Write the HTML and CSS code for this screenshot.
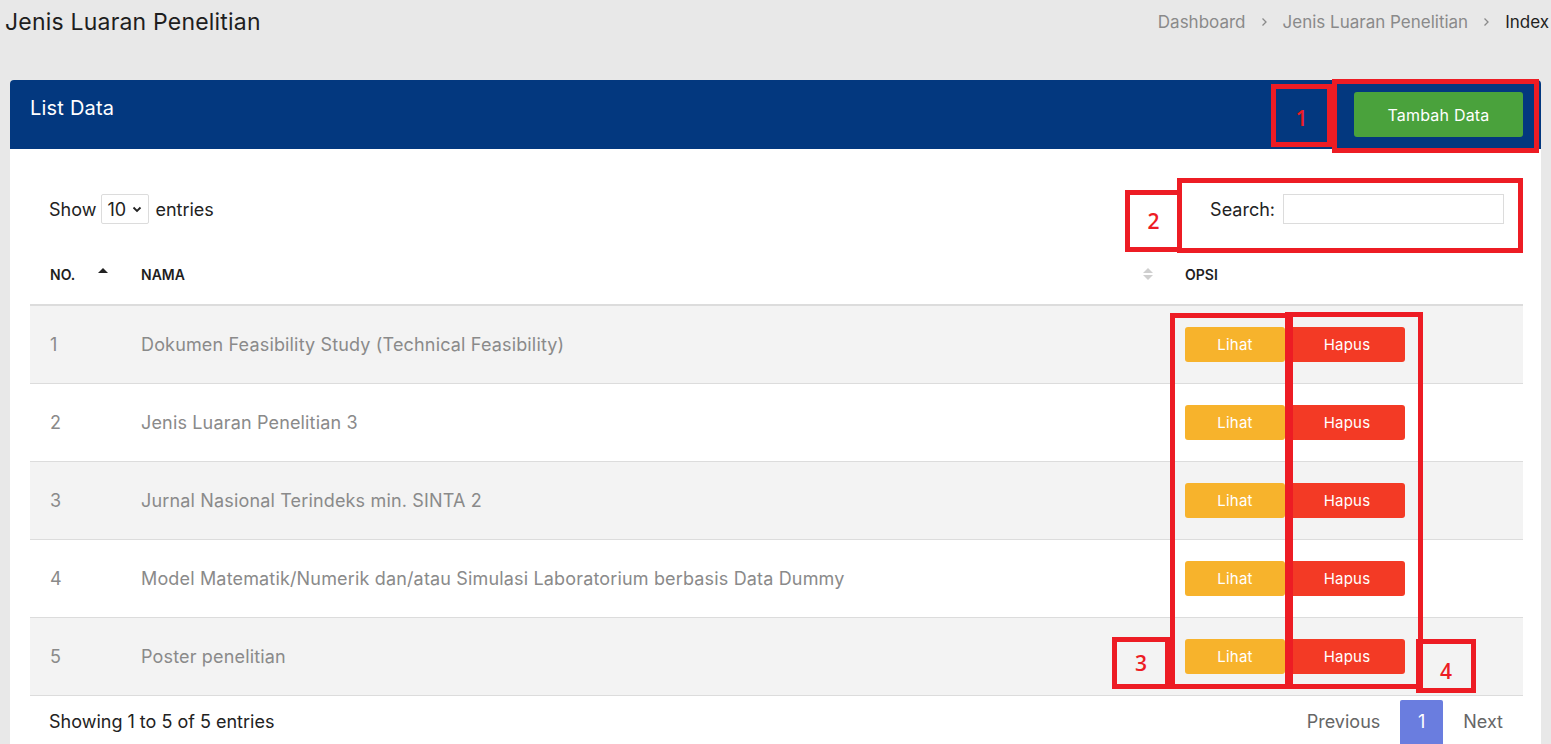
FILE: index.html
```html
<!DOCTYPE html>
<html lang="id">
<head>
<meta charset="utf-8">
<title>Jenis Luaran Penelitian</title>
<link rel="stylesheet" href="styles.css">
</head>
<body>
<div class="topbar">
  <h1 class="page-title">Jenis Luaran Penelitian</h1>
  <nav class="crumbs">
    <span class="crumb">Dashboard</span>
    <svg class="sep" width="7" height="10" viewBox="0 0 7 10"><path d="M1.5 1.5 L5 5 L1.5 8.5" fill="none" stroke="#8a8a8a" stroke-width="1.3"/></svg>
    <span class="crumb">Jenis Luaran Penelitian</span>
    <svg class="sep" width="7" height="10" viewBox="0 0 7 10"><path d="M1.5 1.5 L5 5 L1.5 8.5" fill="none" stroke="#8a8a8a" stroke-width="1.3"/></svg>
    <span class="crumb current">Index</span>
  </nav>
</div>

<div class="card">
  <div class="card-head">
    <div class="card-title">List Data</div>
    <button class="btn btn-green">Tambah Data</button>
  </div>
  <div class="card-body">
    <div class="controls">
      <div class="length">Show
        <span class="select-box">10
          <svg width="10" height="7" viewBox="0 0 10 7"><path d="M1.5 1.5 L5 5 L8.5 1.5" fill="none" stroke="#222" stroke-width="1.8"/></svg>
        </span>
        entries</div>
      <div class="search">Search: <span class="search-input"></span></div>
    </div>
    <table class="data">
      <thead>
        <tr>
          <th class="c-no sort-asc">NO.</th>
          <th class="c-name sort-both">NAMA</th>
          <th class="c-opt">OPSI</th>
        </tr>
      </thead>
      <tbody>
        <tr class="odd"><td>1</td><td>Dokumen Feasibility Study (Technical Feasibility)</td><td><div class="acts"><button class="btn btn-yellow">Lihat</button><button class="btn btn-red">Hapus</button></div></td></tr>
        <tr><td>2</td><td>Jenis Luaran Penelitian 3</td><td><div class="acts"><button class="btn btn-yellow">Lihat</button><button class="btn btn-red">Hapus</button></div></td></tr>
        <tr class="odd"><td>3</td><td>Jurnal Nasional Terindeks min. SINTA 2</td><td><div class="acts"><button class="btn btn-yellow">Lihat</button><button class="btn btn-red">Hapus</button></div></td></tr>
        <tr><td>4</td><td>Model Matematik/Numerik dan/atau Simulasi Laboratorium berbasis Data Dummy</td><td><div class="acts"><button class="btn btn-yellow">Lihat</button><button class="btn btn-red">Hapus</button></div></td></tr>
        <tr class="odd"><td>5</td><td>Poster penelitian</td><td><div class="acts"><button class="btn btn-yellow">Lihat</button><button class="btn btn-red">Hapus</button></div></td></tr>
      </tbody>
    </table>
    <div class="table-foot">
      <div class="info">Showing 1 to 5 of 5 entries</div>
      <div class="pager">
        <span class="pg">Previous</span>
        <span class="pg active">1</span>
        <span class="pg">Next</span>
      </div>
    </div>
  </div>
</div>

<div class="mark a1-label">1</div>
<div class="mark a1-box"></div>
<div class="mark a2-label">2</div>
<div class="mark a2-box"></div>
<div class="mark a3-col"></div>
<div class="mark a4-col"></div>
<div class="mark a3-label">3</div>
<div class="mark a4-label">4</div>
</body>
</html>
```

FILE: styles.css
```css
* { box-sizing: border-box; }
html, body { margin: 0; padding: 0; }
body {
  background: #e8e8e8;
  font-family: "Inter", "Noto Sans", sans-serif;
  color: #222;
  width: 1551px;
  height: 744px;
  overflow: hidden;
  position: relative;
}
.topbar {
  height: 44px;
  display: flex;
  align-items: center;
  justify-content: space-between;
  padding: 0 2px 0 5px;
}
.page-title {
  margin: 0;
  font-size: 23px;
  font-weight: 400;
  letter-spacing: 0.2px;
  color: #1e1e1e;
}
.crumbs {
  display: flex;
  align-items: center;
  font-size: 17px;
  color: #8a8a8a;
}
.crumbs .sep { margin: 0 15px; }
.crumbs .current { color: #1e1e1e; }

.card {
  margin: 36px 10px 0 10px;
  background: #fff;
  border-radius: 4px 4px 0 0;
}
.card-head {
  background: #03387f;
  height: 69px;
  padding: 12px 18px 12px 20px;
  display: flex;
  justify-content: space-between;
  align-items: flex-start;
  border-radius: 4px 4px 0 0;
}
.card-title {
  color: #fff;
  font-size: 20px;
  letter-spacing: 0.2px;
  line-height: 28px;
  padding-top: 2px;
}
.btn {
  font-family: inherit;
  border: 0;
  color: #fff;
  cursor: pointer;
  border-radius: 3px;
  letter-spacing: 0.2px;
}
.btn-green {
  background: #4aa23c;
  width: 169px;
  height: 45px;
  font-size: 16px;
}
.card-body {
  padding: 45px 18px 0 20px;
}
.controls {
  height: 30px;
  display: flex;
  justify-content: space-between;
  align-items: center;
  font-size: 18px;
  padding-left: 19px;
  padding-right: 19px;
}
.length, .search {
  display: flex;
  align-items: center;
}
.select-box {
  display: inline-flex;
  align-items: center;
  justify-content: space-between;
  width: 48px;
  height: 30px;
  border: 1px solid #dcdcdc;
  margin: 0 6px 0 5px;
  padding: 0 6px 0 5px;
  border-radius: 2px;
}
.search-input {
  display: inline-block;
  width: 221px;
  height: 30px;
  border: 1px solid #dcdcdc;
  margin-left: 8px;
}

.data {
  width: 100%;
  border-collapse: collapse;
  margin-top: 26px;
}
.data th {
  text-align: left;
  font-size: 14px;
  font-weight: 600;
  color: #1e1e1e;
  line-height: 20px;
  padding: 15px 20px 19px 20px;
  border-bottom: 2px solid #dcdcdc;
  position: relative;
}
.c-no { width: 91px; }
.c-name { width: 1044px; }
.sort-asc::after {
  content: "";
  position: absolute;
  right: 13px;
  top: 18px;
  border-left: 5px solid transparent;
  border-right: 5px solid transparent;
  border-bottom: 5px solid #222;
}
.sort-both::before {
  content: "";
  position: absolute;
  right: 12px;
  top: 18px;
  border-left: 5px solid transparent;
  border-right: 5px solid transparent;
  border-bottom: 5px solid #cfcfcf;
}
.sort-both::after {
  content: "";
  position: absolute;
  right: 12px;
  top: 25px;
  border-left: 5px solid transparent;
  border-right: 5px solid transparent;
  border-top: 5px solid #cfcfcf;
}
.data td {
  height: 78px;
  padding: 0 20px;
  font-size: 18px;
  letter-spacing: 0.16px;
  color: #8a8a8a;
  border-bottom: 1px solid #dcdcdc;
}
.data tr.odd td { background: #f3f3f3; }
.acts {
  display: flex;
  gap: 4px;
}
.btn-yellow {
  background: #f7b32c;
  width: 100px;
  height: 35px;
  font-size: 15px;
}
.btn-red {
  background: #f33a25;
  width: 116px;
  height: 35px;
  font-size: 15px;
}

.table-foot {
  display: flex;
  justify-content: space-between;
  align-items: flex-start;
}
.info {
  font-size: 18px;
  padding: 15px 0 0 19px;
  line-height: 22px;
}
.pager {
  display: flex;
  margin-top: 4px;
}
.pg {
  font-size: 18px;
  color: #666;
  height: 46px;
  line-height: 44px;
  padding: 0 20px;
}
.pg.active {
  background: #6a7ddf;
  color: #fff;
  width: 43px;
  padding: 0;
  text-align: center;
  border-radius: 2px;
}

.mark {
  position: absolute;
  border: 5px solid #ed1c24;
  color: #ed1c24;
  font-family: "Open Sans", "Liberation Sans", sans-serif;
  font-weight: 600;
  font-size: 21px;
  display: flex;
  align-items: center;
  justify-content: center;
}
.a1-label { left: 1271px; top: 84px; width: 61px; height: 63px; padding-top: 4px; }
.a1-box { left: 1332px; top: 79px; width: 207px; height: 74px; }
.a2-label { left: 1125px; top: 190px; width: 57px; height: 62px; }
.a2-box { left: 1177px; top: 178px; width: 346px; height: 75px; }
.a3-col { left: 1170px; top: 313px; width: 123px; height: 376px; }
.a4-col { left: 1285px; top: 312px; width: 138px; height: 377px; }
.a3-label { left: 1112px; top: 637px; width: 58px; height: 52px; }
.a4-label { left: 1416px; top: 639px; width: 60px; height: 54px; padding-top: 10px; }
```
